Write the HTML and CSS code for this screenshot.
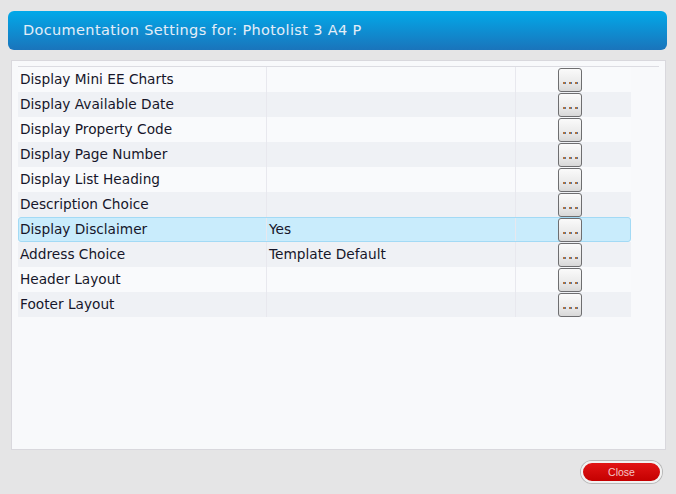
FILE: index.html
```html
<!DOCTYPE html>
<html>
<head>
<meta charset="utf-8">
<link rel="stylesheet" href="styles.css">
</head>
<body>
<div class="dialog">
  <div class="header">Documentation Settings for: Photolist 3 A4 P</div>
  <div class="panel">
    <div class="grid">
      <div class="row"><div class="c1">Display Mini EE Charts</div><div class="c2"></div><div class="c3"><span class="btn"><i></i><i></i><i></i></span></div></div>
      <div class="row alt"><div class="c1">Display Available Date</div><div class="c2"></div><div class="c3"><span class="btn"><i></i><i></i><i></i></span></div></div>
      <div class="row"><div class="c1">Display Property Code</div><div class="c2"></div><div class="c3"><span class="btn"><i></i><i></i><i></i></span></div></div>
      <div class="row alt"><div class="c1">Display Page Number</div><div class="c2"></div><div class="c3"><span class="btn"><i></i><i></i><i></i></span></div></div>
      <div class="row"><div class="c1">Display List Heading</div><div class="c2"></div><div class="c3"><span class="btn"><i></i><i></i><i></i></span></div></div>
      <div class="row alt"><div class="c1">Description Choice</div><div class="c2"></div><div class="c3"><span class="btn"><i></i><i></i><i></i></span></div></div>
      <div class="row sel"><div class="c1">Display Disclaimer</div><div class="c2">Yes</div><div class="c3"><span class="btn"><i></i><i></i><i></i></span></div></div>
      <div class="row alt"><div class="c1">Address Choice</div><div class="c2">Template Default</div><div class="c3"><span class="btn"><i></i><i></i><i></i></span></div></div>
      <div class="row"><div class="c1">Header Layout</div><div class="c2"></div><div class="c3"><span class="btn"><i></i><i></i><i></i></span></div></div>
      <div class="row alt"><div class="c1">Footer Layout</div><div class="c2"></div><div class="c3"><span class="btn"><i></i><i></i><i></i></span></div></div>
    </div>
  </div>
  <div class="footer"><button class="close">Close</button></div>
</div>
</body>
</html>
```

FILE: styles.css
```css
html, body { margin: 0; padding: 0; }
body {
  background: #e5e5e6;
  font-family: "DejaVu Sans", Verdana, sans-serif;
  width: 676px;
  height: 494px;
  overflow: hidden;
}
.dialog {
  padding: 11px 9px 0 8px;
}
.header {
  height: 39px;
  box-sizing: border-box;
  border-radius: 6px;
  background: linear-gradient(#02a9e9, #1a74bb);
  color: #e4eef8;
  font-size: 14.5px;
  letter-spacing: 0.35px;
  line-height: 39px;
  padding-left: 15px;
}
.panel {
  margin: 10px 0 0 3px;
  width: 655px;
  height: 390px;
  box-sizing: border-box;
  border: 1px solid #d9d8dd;
  background: #f8f9fb;
  padding: 5px 0 0 6px;
}
.grid {
  border-top: 1px solid #dcdce2;
  width: 641px;
}
.row {
  display: flex;
  height: 25px;
  width: 613px;
  box-sizing: border-box;
  background: #f9fafc;
  font-size: 13.7px;
  color: #16162a;
  line-height: 24px;
}
.row.alt { background: #eff1f5; }
.row.sel {
  background: #c9ecfc;
  border: 1px solid #a3daf5;
  border-radius: 3px;
  line-height: 22px;
}
.c1 {
  width: 249px;
  border-right: 1px solid #e8e8ee;
  padding-left: 2px;
  box-sizing: border-box;
  white-space: nowrap;
}
.c2 {
  width: 249px;
  border-right: 1px solid #e8e8ee;
  padding-left: 2px;
  box-sizing: border-box;
  white-space: nowrap;
}
.sel .c1 { padding-left: 1px; width: 248px; }
.c3 {
  flex: 1;
  display: flex;
  justify-content: center;
  align-items: center;
  padding-right: 7px;
}
.sel .c3 { padding-right: 6px; }
.btn {
  width: 24px;
  height: 24px;
  box-sizing: border-box;
  border: 1px solid #6e6e70;
  border-radius: 3px;
  background: linear-gradient(#fafafa, #ececec 55%, #d8d8d8);
  display: flex;
  justify-content: center;
  align-items: flex-end;
  gap: 4px;
  padding-bottom: 7px;
}
.btn i {
  display: block;
  width: 2px;
  height: 2px;
  background: #b0703a;
  box-shadow: 1px 0 0 #4d78b0;
}
.footer {
  display: flex;
  justify-content: flex-end;
  padding: 11px 5px 0 0;
}
.close {
  width: 81px;
  height: 22px;
  border-radius: 11px;
  border: 2px solid #f2f2f2;
  box-shadow: 0 0 0 1px #b8b8b8;
  background: linear-gradient(#e21515, #c40000);
  color: #f4c6c6;
  font-family: "Liberation Sans", Arial, sans-serif;
  font-size: 10.5px;
  padding: 0;
}
```
